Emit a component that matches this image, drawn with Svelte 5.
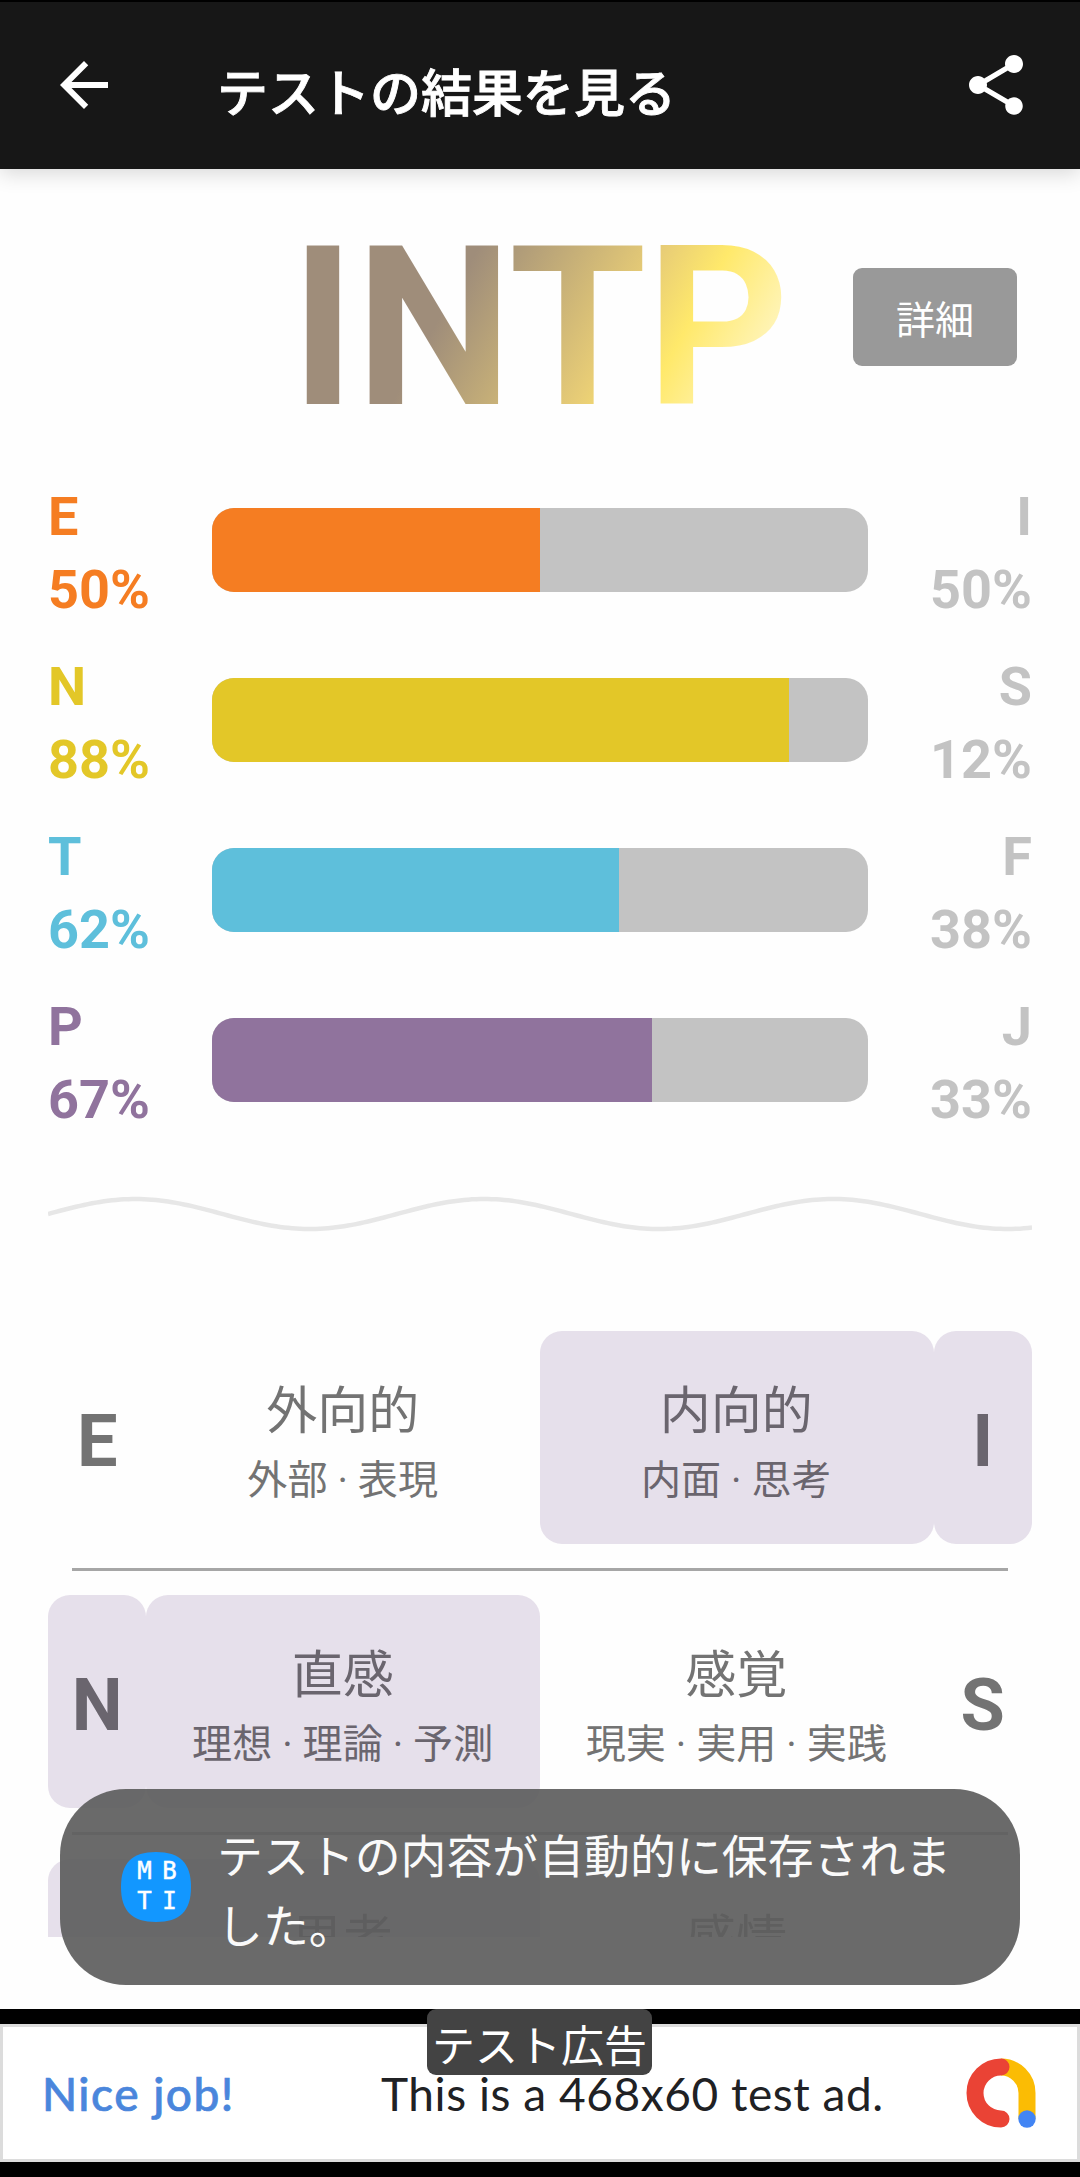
<script>
	const result = 'INTP';

	const scores = [
		{ left: 'E', right: 'I', percent: 50, color: '#f57d22' },
		{ left: 'N', right: 'S', percent: 88, color: '#e3c728' },
		{ left: 'T', right: 'F', percent: 62, color: '#5ebfdb' },
		{ left: 'P', right: 'J', percent: 67, color: '#90739d' }
	];

	const traits = [
		{ left: 'E', right: 'I', picked: 'I', leftName: '外向的', leftHint: '外部 · 表現', rightName: '内向的', rightHint: '内面 · 思考' },
		{ left: 'N', right: 'S', picked: 'N', leftName: '直感', leftHint: '理想 · 理論 · 予測', rightName: '感覚', rightHint: '現実 · 実用 · 実践' },
		{ left: '', right: '', picked: '', leftName: '思考', leftHint: '', rightName: '感情', rightHint: '' }
	];

	// sine line, one point every 4px
	const period = 349;
	let wave = 'M0 18';
	for (let x = 4; x <= 984; x += 4) {
		wave += ` L${x} ${(18 - 15 * Math.sin((x / period) * 2 * Math.PI)).toFixed(2)}`;
	}
</script>

<div class="screen">
	<header>
		<svg class="icon" viewBox="0 0 24 24">
			<path d="M20 11H7.83l5.59-5.59L12 4l-8 8 8 8 1.41-1.41L7.83 13H20v-2z" />
		</svg>
		<h1>テストの結果を見る</h1>
		<svg class="icon" viewBox="0 0 24 24">
			<path
				d="M18 16.08c-.76 0-1.44.3-1.96.77L8.91 12.7c.05-.23.09-.46.09-.7s-.04-.47-.09-.7l7.05-4.11c.54.5 1.25.81 2.04.81 1.66 0 3-1.34 3-3s-1.34-3-3-3-3 1.34-3 3c0 .24.04.47.09.7L8.04 9.81C7.5 9.31 6.79 9 6 9c-1.66 0-3 1.34-3 3s1.34 3 3 3c.79 0 1.5-.31 2.04-.81l7.12 4.16c-.05.21-.08.43-.08.65 0 1.61 1.31 2.92 2.92 2.92s2.92-1.31 2.92-2.92-1.31-2.92-2.92-2.92z"
			/>
		</svg>
	</header>

	<main>
		<section class="result">
			<div class="type">{result}</div>
			<button>詳細</button>
		</section>

		<section class="scores">
			{#each scores as s}
				<div class="score">
					<div class="label" style="color: {s.color}">
						<span>{s.left}</span>
						<span>{s.percent}%</span>
					</div>
					<div class="bar">
						<div class="fill" style="width: {s.percent}%; background: {s.color}"></div>
					</div>
					<div class="label right">
						<span>{s.right}</span>
						<span>{100 - s.percent}%</span>
					</div>
				</div>
			{/each}
		</section>

		<svg class="wave" viewBox="0 0 984 36">
			<path d={wave} />
		</svg>

		<section class="traits">
			{#each traits as t}
				<div class="trait">
					<div class="letter" class:on={t.picked === t.left}>{t.left}</div>
					<div class="cell" class:on={t.picked === t.left}>
						<div class="name">{t.leftName}</div>
						<div class="hint">{t.leftHint}</div>
					</div>
					<div class="cell" class:on={t.picked === t.right && t.right}>
						<div class="name">{t.rightName}</div>
						<div class="hint">{t.rightHint}</div>
					</div>
					<div class="letter" class:on={t.picked === t.right && t.right}>{t.right}</div>
				</div>
			{/each}
		</section>
	</main>

	<footer>
		<div class="ad">
			<span class="nice">Nice job!</span>
			<span class="copy">This is a 468x60 test ad.</span>
			<svg class="admob" viewBox="0 0 70 70">
				<path d="M35 9a26 26 0 0 1 26 26v26" stroke="#fbbc04" />
				<path d="M35 9a26 26 0 0 0 0 52" stroke="#ea4335" stroke-linecap="round" />
				<circle cx="61" cy="61" r="8.7" fill="#4285f4" />
			</svg>
		</div>
		<div class="ad-label">テスト広告</div>
	</footer>

	<div class="toast">
		<div class="app-icon">
			<svg viewBox="0 0 70 70">
				<path d="M35 0C59 0 70 11 70 35S59 70 35 70 0 59 0 35 11 0 35 0z" />
			</svg>
			<div class="app-letters">
				<span>M</span><span>B</span><span>T</span><span>I</span>
			</div>
		</div>
		<p>テストの内容が自動的に保存されました。</p>
	</div>
</div>

<style>
	:global(body) {
		background: #fff;
	}

	.screen {
		position: relative;
		display: flex;
		flex-direction: column;
		width: 1080px;
		height: 2177px;
		overflow: hidden;
		font-family: Roboto, 'Noto Sans CJK JP', sans-serif;
		background: #fefefe;
	}

	header {
		box-sizing: border-box;
		display: flex;
		align-items: center;
		height: 169px;
		padding: 0 48px;
		border-top: 2px solid #000;
		background: #171717;
		box-shadow: 0 4px 20px rgba(0, 0, 0, 0.16);
		z-index: 1;
	}
	.icon {
		width: 72px;
		height: 72px;
		margin-top: -2px;
		fill: #fff;
	}
	h1 {
		flex: 1;
		margin: 18px 0 0 97px;
		font-size: 51px;
		font-weight: 500;
		line-height: 60px;
		color: #fff;
		-webkit-text-stroke: 0.9px #fff;
	}

	main {
		height: 1768px;
		padding: 0 48px;
		overflow: hidden;
	}

	.result {
		display: grid;
		grid-template-rows: 308px;
		grid-template-columns: 1fr auto 1fr;
		align-items: center;
		height: 308px;
	}
	.type {
		grid-column: 2;
		margin-top: 10px;
		font-size: 222px;
		font-weight: 700;
		line-height: 298px;
		background: linear-gradient(119deg, #9f8d7a 34%, #e8cd76 62%, #ffe96b 72%, #fffbe8 94%);
		-webkit-background-clip: text;
		background-clip: text;
		color: transparent;
	}
	button {
		justify-self: end;
		width: 164px;
		height: 98px;
		margin: 0 15px 12px 0;
		padding: 0;
		border: 0;
		border-radius: 9px;
		background: #999;
		font: 39px 'Noto Sans CJK JP', sans-serif;
		color: #fff;
	}

	.scores {
		display: flex;
		flex-direction: column;
		gap: 24px;
	}
	.score {
		display: flex;
		align-items: center;
		height: 146px;
	}
	.label {
		display: flex;
		flex-direction: column;
		width: 164px;
		padding-top: 5px;
		font-size: 54px;
		font-weight: 700;
		line-height: 73px;
	}
	.right {
		align-items: flex-end;
		color: #c3c3c3;
	}
	.bar {
		flex: 1;
		height: 84px;
		border-radius: 22px;
		overflow: hidden;
		background: #c3c3c3;
	}
	.fill {
		height: 100%;
	}

	.wave {
		display: block;
		width: 984px;
		height: 36px;
		margin: 63px 0 99px;
	}
	.wave path {
		fill: none;
		stroke: #e7e7e7;
		stroke-width: 4.5;
	}

	.trait {
		display: flex;
		height: 213px;
		color: #737373;
	}
	.trait + .trait {
		position: relative;
		margin-top: 51px;
	}
	.trait + .trait::before {
		content: '';
		position: absolute;
		top: -27px;
		left: 24px;
		right: 24px;
		height: 3px;
		background: #a6a6a6;
	}
	.letter,
	.cell {
		box-sizing: border-box;
		display: flex;
		flex-direction: column;
		align-items: center;
		justify-content: center;
		border-radius: 22px;
	}
	.letter {
		flex: 0 0 98.4px;
		padding-top: 8px;
		font-size: 72px;
		font-weight: 700;
	}
	.cell {
		flex: 0 0 393.6px;
		padding: 12px 1px 0 0;
	}
	.on {
		background: #e6e0eb;
		color: #6a656e;
	}
	.name {
		font-size: 51px;
		line-height: 74px;
	}
	.hint {
		min-height: 64px;
		font-size: 40.1px;
		line-height: 64px;
	}

	footer {
		position: relative;
		display: flex;
		flex-direction: column;
		justify-content: center;
		height: 168px;
		margin-top: 72px;
		background: #000;
	}
	.ad {
		box-sizing: border-box;
		display: flex;
		align-items: center;
		height: 138px;
		padding: 0 41px 0 39px;
		border: 3px solid #dcdcdc;
		background: #fff;
		font-family: Lato, sans-serif;
		font-size: 46px;
	}
	.nice {
		width: 339px;
		font-weight: 500;
		letter-spacing: 1.5px;
		color: #4a86dc;
		-webkit-text-stroke: 0.7px #4a86dc;
	}
	.copy {
		flex: 1;
		letter-spacing: 0.55px;
		white-space: nowrap;
		color: #202124;
	}
	.admob {
		width: 70px;
		height: 70px;
		fill: none;
		stroke-width: 17;
	}
	.ad-label {
		position: absolute;
		top: 0;
		left: 427px;
		width: 225px;
		height: 66px;
		border-radius: 9px;
		background: #434343;
		font-size: 43px;
		line-height: 76px;
		text-align: center;
		color: #fff;
	}

	.toast {
		position: absolute;
		top: 1789px;
		left: 60px;
		box-sizing: border-box;
		display: flex;
		align-items: center;
		width: 960px;
		height: 196px;
		padding: 0 60px;
		border-radius: 66px;
		background: rgba(93, 93, 93, 0.92);
		z-index: 2;
	}
	.toast p {
		width: 740px;
		margin: 9px 0 0 26px;
		font-size: 45.9px;
		line-height: 70px;
		word-break: break-all;
		color: #fafafa;
	}
	.app-icon {
		position: relative;
		flex: none;
		width: 70px;
		height: 70px;
		margin-left: 1px;
	}
	.app-icon svg {
		display: block;
		fill: #1297ff;
	}
	.app-letters {
		position: absolute;
		inset: 5px 9px 5px 11px;
		display: grid;
		grid-template-columns: 1fr 1fr;
		font: 24px/29px 'DejaVu Sans Mono', monospace;
		text-align: center;
		color: #fff;
		-webkit-text-stroke: 0.5px #fff;
	}
</style>
